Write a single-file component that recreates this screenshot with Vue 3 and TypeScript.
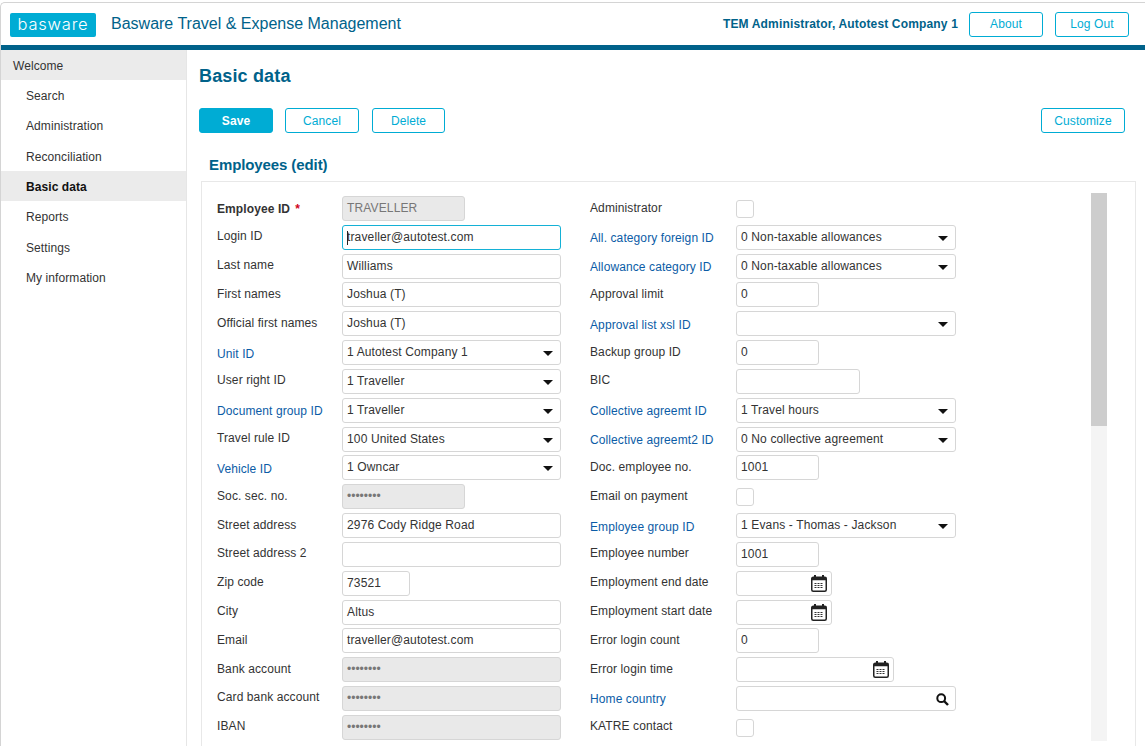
<template>
  <div class="page">
    <header class="top">
      <div class="logo">basware</div>
      <div class="title">Basware Travel &amp; Expense Management</div>
      <div class="user">TEM Administrator, Autotest Company 1</div>
      <button class="btn about">About</button>
      <button class="btn logout">Log Out</button>
    </header>

    <div class="main">
      <nav class="side">
        <div class="welcome">Welcome</div>
        <div
          v-for="item in menu"
          :key="item"
          class="item"
          :class="{ active: item === 'Basic data' }"
        >{{ item }}</div>
      </nav>

      <section class="content">
        <h1>Basic data</h1>
        <div class="actions">
          <button class="btn primary">Save</button>
          <button class="btn">Cancel</button>
          <button class="btn delete">Delete</button>
          <button class="btn customize">Customize</button>
        </div>
        <h2>Employees (edit)</h2>

        <div class="panel">
          <div class="col left">
            <div v-for="row in leftRows" :key="row.label" class="row">
              <label :class="{ link: row.link, req: row.req }">
                {{ row.label }}<span v-if="row.req" class="star">*</span>
              </label>
              <div class="field" :class="[row.kind, row.size, { focus: row.focus }]">
                <span class="val">{{ row.value }}</span>
                <span v-if="row.focus" class="caret"></span>
                <span v-if="row.kind === 'select'" class="arrow"></span>
              </div>
            </div>
          </div>

          <div class="col right">
            <div v-for="row in rightRows" :key="row.label" class="row">
              <label :class="{ link: row.link }">{{ row.label }}</label>
              <div v-if="row.kind === 'check'" class="check"></div>
              <div v-else class="field" :class="[row.kind, row.size]">
                <span class="val">{{ row.value }}</span>
                <span v-if="row.kind === 'select'" class="arrow"></span>
                <svg v-if="row.kind === 'date'" class="cal" width="16" height="17" viewBox="0 0 16 17">
                  <rect x="0.75" y="2.25" width="14.5" height="14" rx="1.5" fill="#fff" stroke="#222" stroke-width="1.5" />
                  <rect x="0.75" y="2.25" width="14.5" height="3" fill="#222" />
                  <rect x="3" y="0" width="2" height="3" fill="#222" />
                  <rect x="11" y="0" width="2" height="3" fill="#222" />
                  <path d="M3.5 8.5h9M3.5 10.5h9M3.5 12.5h9" stroke="#333" stroke-width="1.2" stroke-dasharray="2 1" />
                </svg>
                <svg v-if="row.kind === 'search'" class="mag" width="13" height="13" viewBox="0 0 13 13">
                  <circle cx="5.2" cy="5.2" r="3.9" fill="none" stroke="#111" stroke-width="2" />
                  <path d="M8 8l4 4" stroke="#111" stroke-width="2.4" />
                </svg>
              </div>
            </div>
          </div>

          <div class="scroll"><div class="thumb"></div></div>
        </div>
      </section>
    </div>
  </div>
</template>

<script setup lang="ts">
interface Row {
  label: string
  value?: string
  kind?: string
  size?: string
  link?: boolean
  req?: boolean
  focus?: boolean
}

const menu = ['Search', 'Administration', 'Reconciliation', 'Basic data', 'Reports', 'Settings', 'My information']

const dots = '••••••••'

const leftRows: Row[] = [
  { label: 'Employee ID', value: 'TRAVELLER', kind: 'off', size: 'w123', req: true },
  { label: 'Login ID', value: 'traveller@autotest.com', size: 'w219', focus: true },
  { label: 'Last name', value: 'Williams', size: 'w219' },
  { label: 'First names', value: 'Joshua (T)', size: 'w219' },
  { label: 'Official first names', value: 'Joshua (T)', size: 'w219' },
  { label: 'Unit ID', value: '1 Autotest Company 1', kind: 'select', size: 'w219', link: true },
  { label: 'User right ID', value: '1 Traveller', kind: 'select', size: 'w219' },
  { label: 'Document group ID', value: '1 Traveller', kind: 'select', size: 'w219', link: true },
  { label: 'Travel rule ID', value: '100 United States', kind: 'select', size: 'w219' },
  { label: 'Vehicle ID', value: '1 Owncar', kind: 'select', size: 'w219', link: true },
  { label: 'Soc. sec. no.', value: dots, kind: 'off dots', size: 'w123' },
  { label: 'Street address', value: '2976 Cody Ridge Road', size: 'w219' },
  { label: 'Street address 2', value: '', size: 'w219' },
  { label: 'Zip code', value: '73521', size: 'w68' },
  { label: 'City', value: 'Altus', size: 'w219' },
  { label: 'Email', value: 'traveller@autotest.com', size: 'w219' },
  { label: 'Bank account', value: dots, kind: 'off dots', size: 'w219' },
  { label: 'Card bank account', value: dots, kind: 'off dots', size: 'w219' },
  { label: 'IBAN', value: dots, kind: 'off dots', size: 'w219' }
]

const rightRows: Row[] = [
  { label: 'Administrator', kind: 'check' },
  { label: 'All. category foreign ID', value: '0 Non-taxable allowances', kind: 'select', size: 'w220', link: true },
  { label: 'Allowance category ID', value: '0 Non-taxable allowances', kind: 'select', size: 'w220', link: true },
  { label: 'Approval limit', value: '0', size: 'w83' },
  { label: 'Approval list xsl ID', value: '', kind: 'select', size: 'w220', link: true },
  { label: 'Backup group ID', value: '0', size: 'w83' },
  { label: 'BIC', value: '', size: 'w124' },
  { label: 'Collective agreemt ID', value: '1 Travel hours', kind: 'select', size: 'w220', link: true },
  { label: 'Collective agreemt2 ID', value: '0 No collective agreement', kind: 'select', size: 'w220', link: true },
  { label: 'Doc. employee no.', value: '1001', size: 'w83' },
  { label: 'Email on payment', kind: 'check' },
  { label: 'Employee group ID', value: '1 Evans - Thomas - Jackson', kind: 'select', size: 'w220', link: true },
  { label: 'Employee number', value: '1001', size: 'w83' },
  { label: 'Employment end date', value: '', kind: 'date', size: 'w96' },
  { label: 'Employment start date', value: '', kind: 'date', size: 'w96' },
  { label: 'Error login count', value: '0', size: 'w83' },
  { label: 'Error login time', value: '', kind: 'date', size: 'w158' },
  { label: 'Home country', value: '', kind: 'search', size: 'w220', link: true },
  { label: 'KATRE contact', kind: 'check' }
]
</script>

<style>
html,
body {
  overflow: hidden;
  background: #fff;
}
</style>

<style scoped>
.page {
  height: 744px;
  margin-top: 2px;
  border-top: 1px solid #d4d4d4;
  border-left: 1px solid #d4d4d4;
  border-top-left-radius: 5px;
  overflow: hidden;
  display: flex;
  flex-direction: column;
  font-family: "Liberation Sans", Arial, sans-serif;
  font-size: 12px;
  letter-spacing: 0.08px;
  color: #333;
}

.top {
  height: 42px;
  flex: none;
  display: flex;
  align-items: center;
  padding: 0 16px 0 9px;
  border-bottom: 5px solid #00628a;
}

.logo {
  width: 86px;
  height: 24px;
  margin-top: 1px;
  background: #00acd4;
  border-radius: 2px;
  color: #fff;
  font-family: "Inter", sans-serif;
  font-weight: 300;
  font-size: 16.5px;
  line-height: 23px;
  letter-spacing: 0.8px;
  text-align: center;
}

.title {
  margin-left: 15px;
  font-size: 16px;
  letter-spacing: 0;
  color: #00628a;
}

.user {
  margin-left: auto;
  font-weight: bold;
  letter-spacing: 0.16px;
  color: #00628a;
}

.btn {
  width: 74px;
  height: 25px;
  box-sizing: border-box;
  padding: 0;
  background: #fff;
  border: 1px solid #00acd4;
  border-radius: 3px;
  color: #00acd4;
  font-family: inherit;
  font-size: 12px;
  letter-spacing: 0.08px;
}

.about {
  margin-left: 11px;
}

.logout {
  margin-left: 12px;
}

.main {
  flex: 1;
  display: flex;
  min-height: 0;
}

.side {
  width: 185px;
  flex: none;
  border-right: 1px solid #e6e6e6;
}

.welcome {
  height: 30px;
  line-height: 32px;
  padding-left: 12px;
  background: #ebebeb;
}

.item {
  height: 30.35px;
  line-height: 32px;
  padding-left: 25px;
}

.item.active {
  background: #ebebeb;
  font-weight: bold;
  color: #111;
}

.content {
  flex: 1;
  min-width: 0;
  padding-left: 12px;
}

h1 {
  margin: 16px 0 0;
  font-size: 18px;
  line-height: 20px;
  letter-spacing: 0.15px;
  color: #00628a;
}

.actions {
  display: flex;
  gap: 12px;
  margin-top: 22px;
  padding-right: 20px;
}

.actions .primary {
  background: #00acd4;
  color: #fff;
  font-weight: bold;
}

.actions .delete {
  width: 73px;
  margin-left: 1px;
}

.actions .customize {
  width: 84px;
  margin-left: auto;
}

h2 {
  margin: 23px 0 0 10px;
  font-size: 15px;
  line-height: 18px;
  letter-spacing: -0.1px;
  color: #00628a;
}

.panel {
  margin: 7px 9px 0 2px;
  height: 600px;
  box-sizing: border-box;
  border: 1px solid #e8e8e8;
  display: flex;
  position: relative;
  padding-top: 14px;
}

.col {
  flex: none;
  display: grid;
  grid-auto-rows: 28.83px;
  align-content: start;
}

.left {
  width: 373px;
  padding-left: 15px;
}

.row {
  display: flex;
  align-items: flex-start;
}

label {
  flex: none;
  padding-top: 4.4px;
  line-height: 14px;
  letter-spacing: 0.1px;
}

.left label {
  width: 125px;
}

.right label {
  width: 146px;
}

.right .row:first-child label {
  padding-top: 5px;
}

label.link {
  padding-top: 6.4px;
  color: #0b5ca6;
}

label.req {
  padding-top: 6px;
  font-weight: bold;
}

.star {
  margin-left: 5px;
  color: #d0021b;
}

.field {
  position: relative;
  height: 25px;
  box-sizing: border-box;
  border: 1px solid #d6d6d6;
  border-radius: 3px;
  padding-left: 4px;
  line-height: 23.4px;
  background: #fff;
  white-space: nowrap;
  letter-spacing: 0.14px;
}

.w68 { width: 68px; }
.w83 { width: 83px; }
.w96 { width: 96px; }
.w123 { width: 123px; }
.w124 { width: 124px; }
.w158 { width: 158px; }
.w219 { width: 219px; }
.w220 { width: 220px; }

.off {
  background: #e9e9e9;
  color: #777;
}

.dots .val {
  letter-spacing: 0;
}

.focus {
  border-color: #14b1d6;
}

.caret {
  position: absolute;
  left: 4px;
  top: 5px;
  width: 1px;
  height: 14px;
  background: #222;
}

.arrow {
  position: absolute;
  right: 7px;
  top: 10px;
  border-left: 5.5px solid transparent;
  border-right: 5.5px solid transparent;
  border-top: 5.5px solid #111;
}

.cal {
  position: absolute;
  right: 4px;
  top: 3px;
}

.mag {
  position: absolute;
  right: 6px;
  top: 6px;
}

.check {
  width: 18px;
  height: 18px;
  box-sizing: border-box;
  margin-top: 4px;
  border: 1px solid #d6d6d6;
  border-radius: 3px;
}

.right {
  width: 366px;
  padding-left: 15px;
  margin-left: -15px;
}

.scroll {
  position: absolute;
  left: 889px;
  top: 11px;
  width: 16px;
  height: 548px;
  background: #f4f4f4;
}

.thumb {
  height: 233px;
  background: #cdcdcd;
}
</style>
